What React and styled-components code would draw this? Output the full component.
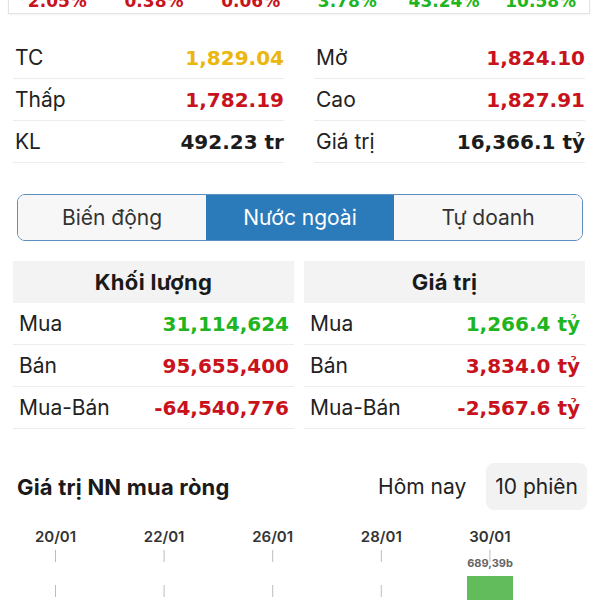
import React from "react";
import styled, { createGlobalStyle } from "styled-components";

const C = {
  red: "#c8121c",
  green: "#1eb521",
  gold: "#ebb60e",
  dark: "#1c1c1c",
  line: "#ececec",
  blue: "#2b7bbb",
};

const NUM_FONT = `"DejaVu Sans", Inter, sans-serif`;

const GlobalStyle = createGlobalStyle`
  html, body {
    margin: 0;
    padding: 0;
    background: #fff;
  }
  body {
    font-family: Inter, "Noto Sans", sans-serif;
    color: ${C.dark};
    overflow: hidden;
  }
`;

const percents = [
  { v: "2.05%", c: C.red },
  { v: "0.38%", c: C.red },
  { v: "0.06%", c: C.red },
  { v: "3.78%", c: C.green },
  { v: "43.24%", c: C.green },
  { v: "10.58%", c: C.green },
];

const stats = [
  [
    { label: "TC", value: "1,829.04", color: C.gold },
    { label: "Thấp", value: "1,782.19", color: C.red },
    { label: "KL", value: "492.23 tr", color: C.dark },
  ],
  [
    { label: "Mở", value: "1,824.10", color: C.red },
    { label: "Cao", value: "1,827.91", color: C.red },
    { label: "Giá trị", value: "16,366.1 tỷ", color: C.dark },
  ],
];

const tabs = ["Biến động", "Nước ngoài", "Tự doanh"];

const foreign = [
  {
    title: "Khối lượng",
    rows: [
      { label: "Mua", value: "31,114,624", color: C.green },
      { label: "Bán", value: "95,655,400", color: C.red },
      { label: "Mua-Bán", value: "-64,540,776", color: C.red },
    ],
  },
  {
    title: "Giá trị",
    rows: [
      { label: "Mua", value: "1,266.4 tỷ", color: C.green },
      { label: "Bán", value: "3,834.0 tỷ", color: C.red },
      { label: "Mua-Bán", value: "-2,567.6 tỷ", color: C.red },
    ],
  },
];

const dates = ["20/01", "22/01", "26/01", "28/01", "30/01"];

export default function App() {
  return (
    <S.Page>
      <GlobalStyle />
      <S.Strip>
        {percents.map((p, i) => (
          <S.Pct key={i} color={p.c}>
            {p.v}
          </S.Pct>
        ))}
      </S.Strip>

      <S.Stats>
        {stats.map((col, i) => (
          <div key={i}>
            {col.map((r) => (
              <S.StatRow key={r.label}>
                <S.Label>{r.label}</S.Label>
                <S.Value color={r.color}>{r.value}</S.Value>
              </S.StatRow>
            ))}
          </div>
        ))}
      </S.Stats>

      <S.Tabs>
        {tabs.map((t, i) => (
          <S.Tab key={t} active={i === 1}>
            {t}
          </S.Tab>
        ))}
      </S.Tabs>

      <S.Panels>
        {foreign.map((p) => (
          <div key={p.title}>
            <S.PanelHead>{p.title}</S.PanelHead>
            {p.rows.map((r) => (
              <S.PanelRow key={r.label}>
                <S.Label>{r.label}</S.Label>
                <S.Value color={r.color}>{r.value}</S.Value>
              </S.PanelRow>
            ))}
          </div>
        ))}
      </S.Panels>

      <S.ChartHead>
        <S.ChartTitle>Giá trị NN mua ròng</S.ChartTitle>
        <S.Switch>
          <S.SwitchItem>Hôm nay</S.SwitchItem>
          <S.SwitchItem active>10 phiên</S.SwitchItem>
        </S.Switch>
      </S.ChartHead>

      <S.Chart width="600" height="90" viewBox="0 0 600 90">
        {dates.map((d, i) => {
          const x = 55.5 + i * 108.6;
          return (
            <g key={d}>
              <text
                x={x}
                y={32}
                textAnchor="middle"
                fontSize="15"
                fontWeight="600"
                fill="#333"
                fontFamily="Inter, sans-serif"
              >
                {d}
              </text>
              <line
                x1={x}
                x2={x}
                y1={40}
                y2={90}
                stroke="#bdbdbd"
                strokeWidth="1"
                strokeDasharray="12 23"
              />
            </g>
          );
        })}
        <rect x="467" y="66" width="46" height="24" fill="#63bc5c" />
        <text
          x="490"
          y="57"
          textAnchor="middle"
          fontSize="11"
          fontWeight="700"
          fill="#666"
          fontFamily="Inter, sans-serif"
        >
          689,39b
        </text>
      </S.Chart>
    </S.Page>
  );
}

const S = {};

S.Page = styled.div`
  width: 600px;
  height: 600px;
  display: flex;
  flex-direction: column;
`;

S.Strip = styled.div`
  margin: 0 10px 0 8px;
  height: 14px;
  flex-shrink: 0;
  box-sizing: border-box;
  border: 1px solid #e3e3e3;
  border-top: none;
  box-shadow: 0 1px 2px rgba(0, 0, 0, 0.05);
  display: flex;
  align-items: flex-end;
  overflow: hidden;
`;

S.Pct = styled.div`
  flex: 1;
  color: ${(p) => p.color};
  font-family: ${NUM_FONT};
  font-size: 17px;
  font-weight: 700;
  line-height: 20px;
  text-align: center;
  padding-bottom: 2px;
`;

S.Stats = styled.div`
  margin: 23px 15px 0 13px;
  display: grid;
  grid-template-columns: 1fr 1fr;
  column-gap: 30px;
`;

S.StatRow = styled.div`
  height: 41px;
  display: flex;
  align-items: center;
  justify-content: space-between;
  padding-left: 2px;
  border-bottom: 1px solid ${C.line};
`;

S.Label = styled.span`
  font-size: 21px;
  color: #222;
`;

S.Value = styled.span`
  font-family: ${NUM_FONT};
  font-size: 20px;
  font-weight: 700;
  color: ${(p) => p.color};
`;

S.Tabs = styled.div`
  margin: 31px 17px 0 17px;
  height: 47px;
  box-sizing: border-box;
  border: 1.5px solid #5d8fbe;
  border-radius: 8px;
  overflow: hidden;
  display: grid;
  grid-template-columns: repeat(3, 1fr);
`;

S.Tab = styled.div`
  display: flex;
  align-items: center;
  justify-content: center;
  font-size: 21px;
  background: ${(p) => (p.active ? C.blue : "#f7f7f7")};
  color: ${(p) => (p.active ? "#fff" : "#333")};
`;

S.Panels = styled.div`
  margin: 20px 15px 0 13px;
  display: grid;
  grid-template-columns: 1fr 1fr;
  column-gap: 10px;
`;

S.PanelHead = styled.div`
  height: 42px;
  background: #f3f3f3;
  display: flex;
  align-items: center;
  justify-content: center;
  font-size: 22px;
  font-weight: 700;
  letter-spacing: 0.3px;
  color: #1a1a1a;
`;

S.PanelRow = styled.div`
  height: 41px;
  display: flex;
  align-items: center;
  justify-content: space-between;
  padding: 0 5px 0 6px;
  border-bottom: 1px solid ${C.line};
`;

S.ChartHead = styled.div`
  margin: 34px 13px 0 17px;
  display: flex;
  align-items: center;
  justify-content: space-between;
`;

S.ChartTitle = styled.div`
  font-size: 22px;
  font-weight: 700;
  letter-spacing: 0.2px;
  color: #1a1a1a;
`;

S.Switch = styled.div`
  display: flex;
  align-items: center;
  gap: 11px;
`;

S.SwitchItem = styled.div`
  height: 47px;
  display: flex;
  align-items: center;
  padding: 0 9px;
  border-radius: 8px;
  font-size: 21px;
  color: #222;
  background: ${(p) => (p.active ? "#f2f2f2" : "transparent")};
`;

S.Chart = styled.svg`
  display: block;
  flex-shrink: 0;
`;
